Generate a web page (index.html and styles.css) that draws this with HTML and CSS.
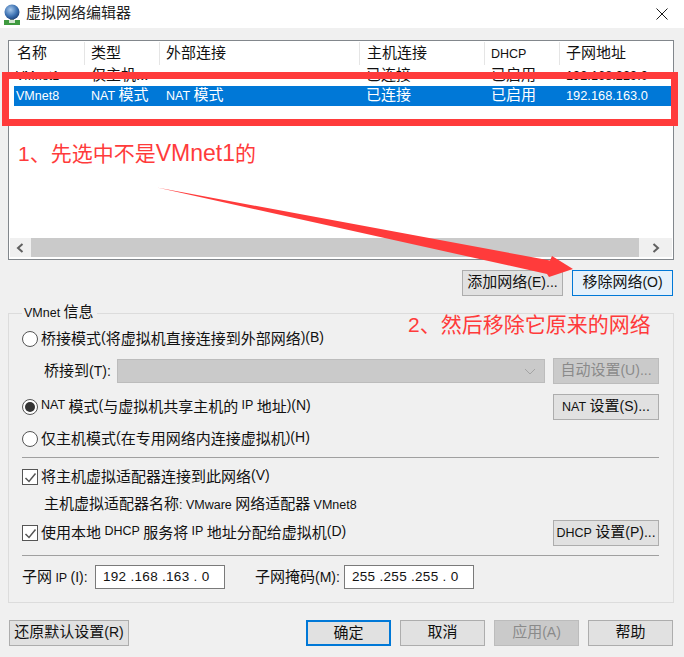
FILE: index.html
```html
<!DOCTYPE html>
<html lang="zh-CN">
<head>
<meta charset="utf-8">
<title>虚拟网络编辑器</title>
<link rel="stylesheet" href="styles.css">
</head>
<body>
<div class="window">
  <header class="titlebar">
    <svg class="app-icon" width="20" height="22" viewBox="0 0 20 22">
      <defs><radialGradient id="globe" cx="0.4" cy="0.35" r="0.7"><stop offset="0" stop-color="#a9c8ea"/><stop offset="0.6" stop-color="#3f74b4"/><stop offset="1" stop-color="#1d3f78"/></radialGradient></defs>
      <rect x="8" y="14" width="4" height="4" fill="#7c8c80"/>
      <rect x="2" y="17" width="16" height="5" fill="#3f9a3f"/>
      <rect x="7" y="17" width="6" height="3" fill="#d5e6d2"/>
      <circle cx="10" cy="9" r="7.5" fill="url(#globe)"/>
    </svg>
    <span class="title-text">虚拟网络编辑器</span>
    <svg class="close" width="12" height="12" viewBox="0 0 12 12"><path d="M0.5 0.5 11.5 11.5M11.5 0.5 0.5 11.5" stroke="#1a1a1a" stroke-width="1" fill="none"/></svg>
  </header>
  <main class="content">
    <section class="listbox">
      <div class="row head">
        <span class="c1">名称</span><span class="c2">类型</span><span class="c3">外部连接</span><span class="c4">主机连接</span><span class="c5"><span class="l">DHCP</span></span><span class="c6">子网地址</span>
      </div>
      <div class="row">
        <span class="c1"><span class="l">VMnet1</span></span><span class="c2">仅主机...</span><span class="c3"></span><span class="c4">已连接</span><span class="c5">已启用</span><span class="c6"><span class="l">192.168.229.0</span></span>
      </div>
      <div class="row selected">
        <span class="c1"><span class="l">VMnet8</span></span><span class="c2"><span class="l">NAT</span> 模式</span><span class="c3"><span class="l">NAT</span> 模式</span><span class="c4">已连接</span><span class="c5">已启用</span><span class="c6"><span class="l">192.168.163.0</span></span>
      </div>
      <div class="list-space"></div>
      <div class="hscroll">
        <div class="scroll-btn left"><svg width="9" height="10" viewBox="0 0 9 10"><path d="M6.5 1 2 5 6.5 9" fill="none" stroke="#606060" stroke-width="2"/></svg></div>
        <div class="thumb"></div>
        <div class="scroll-btn right"><svg width="9" height="10" viewBox="0 0 9 10"><path d="M2.5 1 7 5 2.5 9" fill="none" stroke="#606060" stroke-width="2"/></svg></div>
      </div>
    </section>

    <div class="list-actions">
      <button class="btn add">添加网络<span class="p">(E)...</span></button>
      <button class="btn remove">移除网络<span class="p">(O)</span></button>
    </div>

    <fieldset class="group">
      <legend><span class="l">VMnet</span> 信息</legend>
      <div class="line r1"><label class="opt"><span class="radio"></span>桥接模式<span class="p">(</span>将虚拟机直接连接到外部网络<span class="p">)(B)</span></label></div>
      <div class="line r2">
        <span class="bridge-label">桥接到<span class="p">(T):</span></span>
        <div class="select"><svg width="12" height="7" viewBox="0 0 12 7"><path d="M1 1 6 6 11 1" fill="none" stroke="#a4a4a4"/></svg></div>
        <button class="btn side disabled">自动设置<span class="p">(U)...</span></button>
      </div>
      <div class="line r3">
        <label class="opt"><span class="radio on"></span><span class="l">NAT</span> 模式<span class="p">(</span>与虚拟机共享主机的 <span class="l">IP</span> 地址<span class="p">)(N)</span></label>
        <button class="btn side"><span class="l">NAT</span> 设置<span class="p">(S)...</span></button>
      </div>
      <div class="line r4"><label class="opt"><span class="radio"></span>仅主机模式<span class="p">(</span>在专用网络内连接虚拟机<span class="p">)(H)</span></label></div>
      <hr class="sep s1">
      <div class="line r5"><label class="opt"><span class="check"><svg width="13" height="13" viewBox="0 0 13 13"><path d="M1.5 7 5 10.5 11.5 2.5" fill="none" stroke="#555" stroke-width="1.5"/></svg></span>将主机虚拟适配器连接到此网络<span class="p">(V)</span></label></div>
      <div class="line r6"><span class="adapter">主机虚拟适配器名称<span class="l">: VMware</span> 网络适配器 <span class="l">VMnet8</span></span></div>
      <div class="line r7">
        <label class="opt"><span class="check"><svg width="13" height="13" viewBox="0 0 13 13"><path d="M1.5 7 5 10.5 11.5 2.5" fill="none" stroke="#555" stroke-width="1.5"/></svg></span>使用本地 <span class="l">DHCP</span> 服务将 <span class="l">IP</span> 地址分配给虚拟机<span class="p">(D)</span></label>
        <button class="btn side"><span class="l">DHCP</span> 设置<span class="p">(P)...</span></button>
      </div>
      <hr class="sep s2">
      <div class="line r8">
        <span class="ip-label">子网 <span class="l">IP</span> <span class="p">(I):</span></span>
        <div class="ip-input">192 .168 .163 . 0</div>
        <span class="mask-label">子网掩码<span class="p">(M):</span></span>
        <div class="ip-input">255 .255 .255 . 0</div>
      </div>
    </fieldset>

    <footer class="footer">
      <button class="btn restore">还原默认设置<span class="p">(R)</span></button>
      <div class="footer-right">
        <button class="btn foot primary">确定</button>
        <button class="btn foot">取消</button>
        <button class="btn foot disabled">应用<span class="p">(A)</span></button>
        <button class="btn foot">帮助</button>
      </div>
    </footer>
  </main>

  <svg class="annot-arrow" width="684" height="657" viewBox="0 0 684 657">
    <polygon points="157,187.5 550,260.5 552,256 573,269 549,277 547,274" fill="#ff3b3b"/>
  </svg>
  <div class="annot-box"></div>
  <div class="annot-text t1">1、先选中不是<span class="t-latin">VMnet1</span>的</div>
  <div class="annot-text t2">2、然后移除它原来的网络</div>
</div>
</body>
</html>
```
FILE: styles.css
```css
* { box-sizing: border-box; }
html, body { margin: 0; padding: 0; }
body {
  width: 684px;
  height: 657px;
  overflow: hidden;
  background: #f0f0f0;
  font-family: "Noto Sans CJK SC", "Liberation Sans", sans-serif;
  font-size: 15px;
  color: #111;
}
.l { font-family: "Liberation Sans", sans-serif; font-size: 12.5px; }
.p { font-family: "Liberation Sans", sans-serif; font-size: 14px; }
.window { position: relative; width: 684px; height: 657px; }

.titlebar { height: 28px; background: #fff; display: flex; align-items: center; padding-left: 2px; }
.app-icon { flex: none; }
.title-text { margin-left: 4px; line-height: 20px; color: #222; padding-bottom: 4px; }
.close { margin-left: auto; margin-right: 16px; }

.content { padding: 12px 10px 0 8px; }

.listbox {
  height: 220px;
  background: #fff;
  border: 1px solid #82878c;
  display: flex;
  flex-direction: column;
  line-height: 16px;
}
.row { display: grid; grid-template-columns: 75px 75px 200px 125px 75px 1fr; height: 20px; margin: 0 2px 0 5px; align-items: center; white-space: nowrap; }
.row > span { padding-left: 2px; height: 20px; }
.row .c6 .l { font-size: 12.8px; }
.row.head { grid-template-columns: 76px 75px 200px 125px 75px 1fr; height: 25px; align-items: start; padding-top: 1px; margin: 0; line-height: 20px; }
.row.head > span { border-right: 1px solid #e5e5e5; height: 23px; padding-left: 7px; }
.row.head > span:last-child { border-right: 0; padding-left: 6px; }
.row.head .c1 { padding-left: 8px; }
.row.head .c2, .row.head .c3, .row.head .c5 { padding-left: 6px; }
.row.selected { background: #0078d7; color: #fff; }
.list-space { flex: 1; }
.hscroll { height: 19px; margin: 0 1px 2px 1px; background: #f0f0f0; display: flex; align-items: stretch; }
.scroll-btn { display: flex; align-items: center; justify-content: center; flex: none; }
.scroll-btn.left { width: 21px; }
.scroll-btn.right { width: 33px; }
.thumb { flex: 1; background: #cacaca; }

.list-actions { display: flex; justify-content: flex-end; gap: 9px; margin: 10px 1px 0 0; }
.btn {
  height: 26px;
  padding: 0 0 4px;
  background: #e1e1e1;
  border: 1px solid #adadad;
  font: inherit;
  line-height: 20px;
  color: #111;
  white-space: nowrap;
}
.add { width: 101px; }
.remove { width: 101px; background: #e5f1fb; border-color: #0078d7; }

.group {
  margin: 7px 0 0;
  padding: 0 14px 0 13px;
  height: 300px;
  border: 1px solid #dcdcdc;
  min-width: 0;
}
.group legend { padding: 0 3px 0 2px; line-height: 16px; height: 20px; color: #111; }
.line { display: flex; align-items: center; justify-content: space-between; white-space: nowrap; }
.opt { display: flex; align-items: center; white-space: pre; padding-bottom: 4px; }
.radio { width: 16px; height: 16px; border: 1px solid #555; border-radius: 50%; background: #fff; margin-right: 3px; flex: none; position: relative; top: 2px; }
.radio.on::after { content: ""; position: absolute; left: 2px; top: 2px; width: 10px; height: 10px; background: #333; border-radius: 50%; }
.check { width: 16px; height: 16px; border: 1px solid #555; background: #fff; margin-right: 3px; flex: none; display: flex; align-items: center; justify-content: center; position: relative; top: 2px; }

.r1 { height: 24px; margin-top: 4px; }
.r2 { height: 26px; margin-top: 7px; justify-content: flex-start; }
.r3 { height: 26px; margin-top: 10px; }
.r4 { height: 24px; margin-top: 7px; }
.r5 { height: 24px; margin-top: 7px; }
.r6 { height: 20px; margin-top: 5px; padding-left: 22px; justify-content: flex-start; }
.r7 { height: 26px; margin-top: 6px; }
.r8 { height: 24px; margin-top: 9px; justify-content: flex-start; }

.bridge-label { margin-left: 22px; width: 73px; flex: none; }
.ip-label, .mask-label, .bridge-label, .adapter { padding-bottom: 4px; }
.select { width: 428px; height: 24px; background: #cacaca; border: 1px solid #bcbcbc; display: flex; align-items: center; justify-content: flex-end; padding-right: 8px; }
.r2 .btn { margin-left: 8px; }
.side { width: 106px; }
.disabled { background: #cacaca; border-color: #bcbcbc; color: #8a8a8a; }
.sep { margin: 0; height: 1px; border: 0; background: #a0a0a0; }
.s1 { margin-top: 6px; }
.s2 { margin-top: 9px; }
.ip-label { width: 73px; flex: none; }
.mask-label { margin-left: 30px; width: 89px; flex: none; }
.ip-input { width: 130px; height: 24px; border: 1px solid #7a7a7a; background: #fff; font-family: "Liberation Sans", sans-serif; font-size: 13.5px; letter-spacing: 0.3px; line-height: 22px; padding-left: 7px; white-space: pre; }

.footer { display: flex; justify-content: space-between; margin: 17px 1px 0 0; padding-left: 1px; }
.restore { width: 120px; }
.footer-right { display: flex; gap: 9px; }
.foot { width: 85px; }
.primary { border: 2px solid #0078d7; }

.annot-arrow { position: absolute; left: 0; top: 0; pointer-events: none; }
.annot-box { position: absolute; left: 2px; top: 72px; width: 676px; height: 54px; border: 7px solid #ff3b3b; }
.annot-text { position: absolute; color: #ff3b3b; font-size: 21px; line-height: 28px; white-space: nowrap; font-family: "Liberation Sans", "Noto Sans CJK SC", sans-serif; }
.t-latin { font-size: 23px; }
.t1 { left: 18px; top: 139px; }
.t2 { left: 408px; top: 311px; }
```
